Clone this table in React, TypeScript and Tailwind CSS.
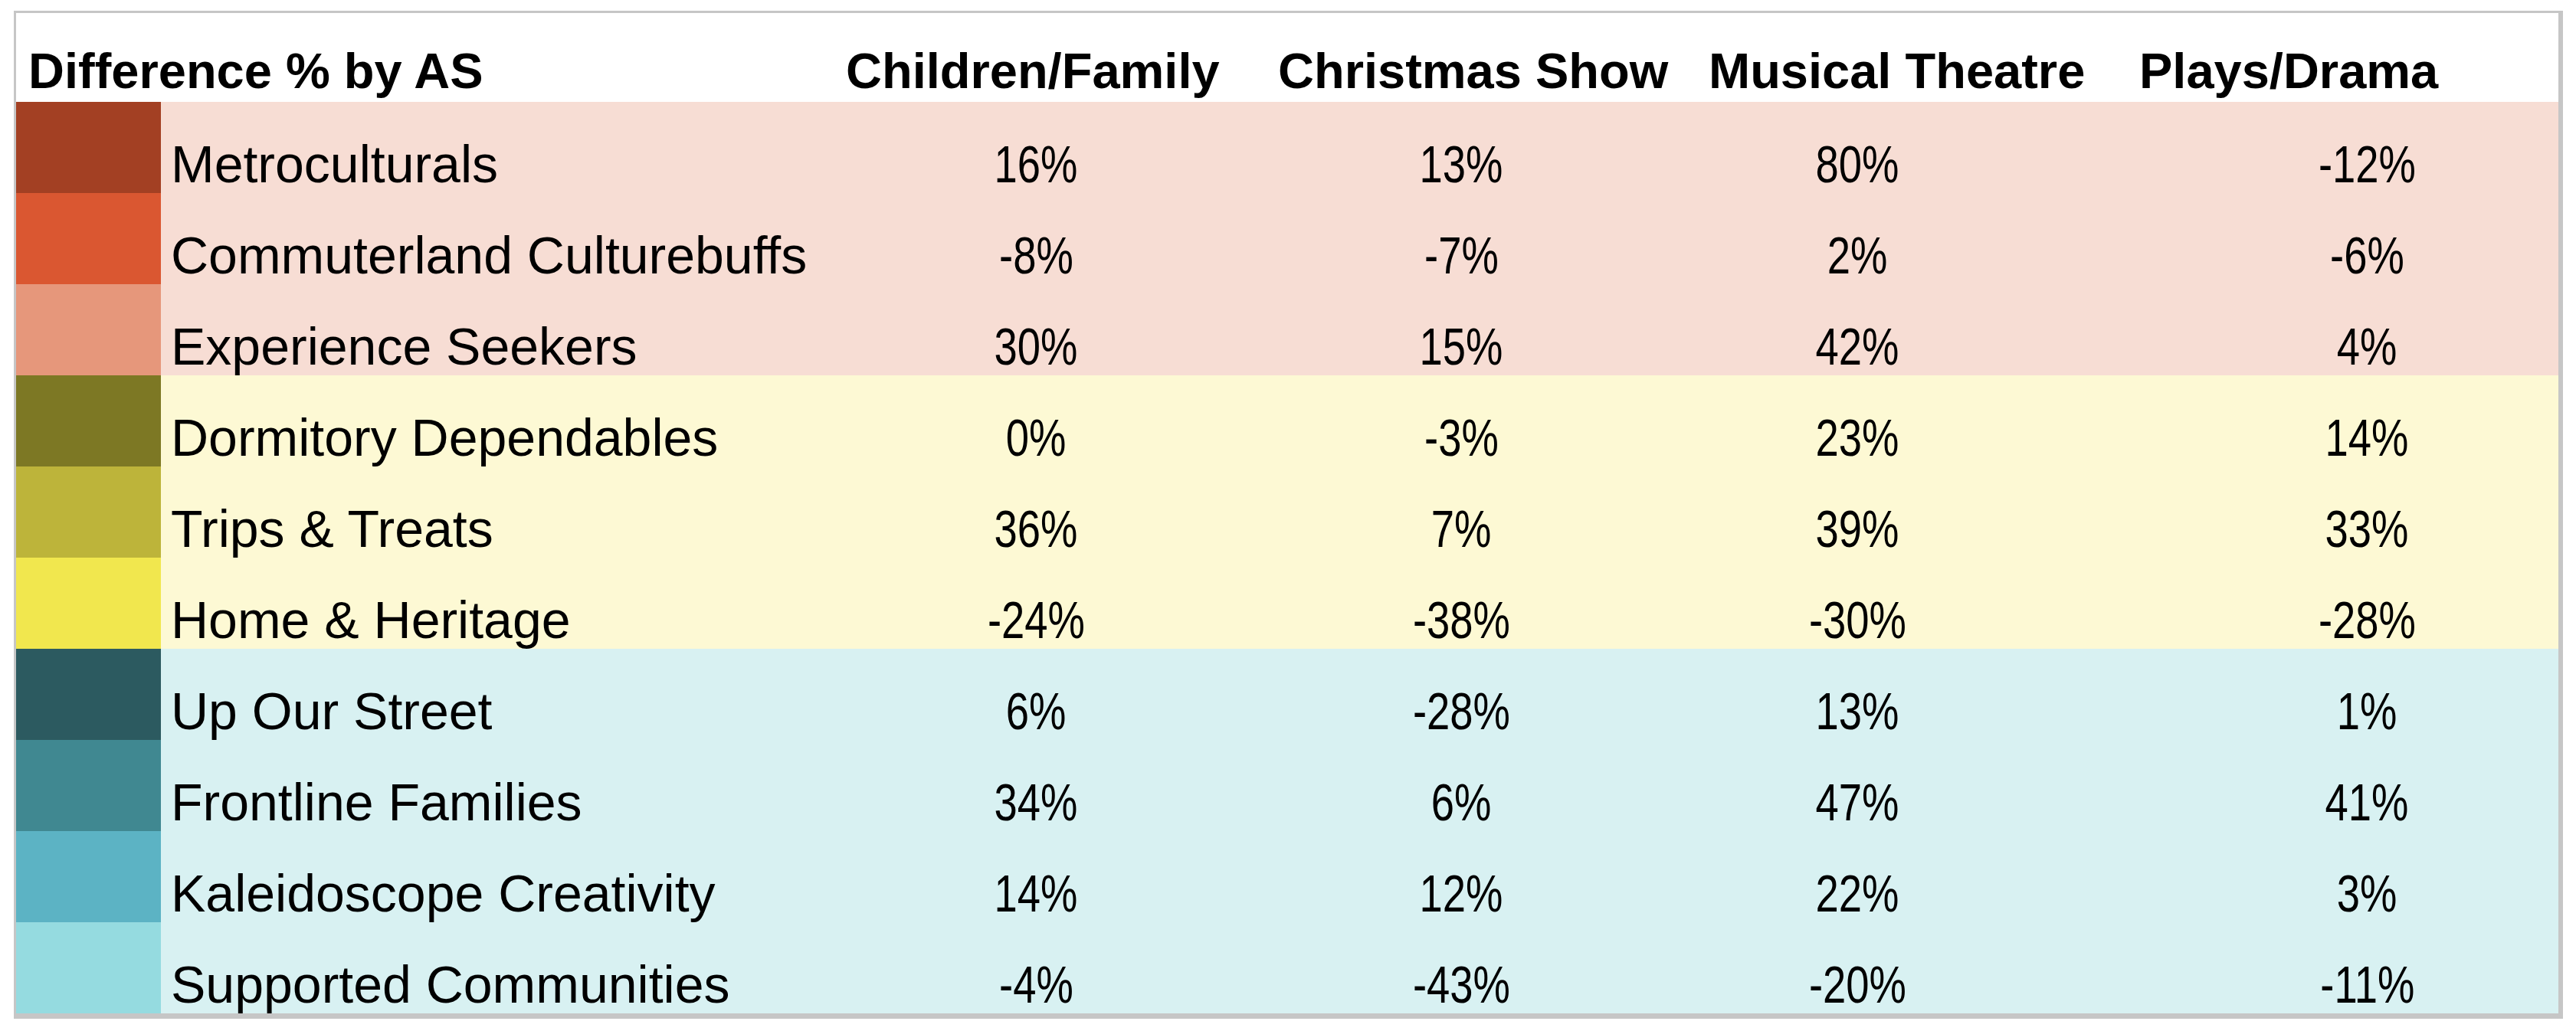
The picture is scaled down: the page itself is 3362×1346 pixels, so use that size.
import React from 'react';

type Row = {
  label: string;
  swatch: string;
  values: [string, string, string, string];
};

type Group = {
  band: string;
  rows: Row[];
};

const groups: Group[] = [
  {
    band: 'bg-[#f7ddd4]',
    rows: [
      { label: 'Metroculturals', swatch: 'bg-[#a34023]', values: ['16%', '13%', '80%', '-12%'] },
      { label: 'Commuterland Culturebuffs', swatch: 'bg-[#da5731]', values: ['-8%', '-7%', '2%', '-6%'] },
      { label: 'Experience Seekers', swatch: 'bg-[#e6977b]', values: ['30%', '15%', '42%', '4%'] },
    ],
  },
  {
    band: 'bg-[#fdf9d4]',
    rows: [
      { label: 'Dormitory Dependables', swatch: 'bg-[#7d7824]', values: ['0%', '-3%', '23%', '14%'] },
      { label: 'Trips & Treats', swatch: 'bg-[#bdb43a]', values: ['36%', '7%', '39%', '33%'] },
      { label: 'Home & Heritage', swatch: 'bg-[#f1e74e]', values: ['-24%', '-38%', '-30%', '-28%'] },
    ],
  },
  {
    band: 'bg-[#d8f1f2]',
    rows: [
      { label: 'Up Our Street', swatch: 'bg-[#2c5a60]', values: ['6%', '-28%', '13%', '1%'] },
      { label: 'Frontline Families', swatch: 'bg-[#408891]', values: ['34%', '6%', '47%', '41%'] },
      { label: 'Kaleidoscope Creativity', swatch: 'bg-[#5cb3c4]', values: ['14%', '12%', '22%', '3%'] },
      { label: 'Supported Communities', swatch: 'bg-[#95dbe0]', values: ['-4%', '-43%', '-20%', '-11%'] },
    ],
  },
];

const cell = 'flex items-end justify-center leading-[76px]';

// the source's figures are a narrow face; squeeze Arial-width digits to match
function Num({ v }: { v: string }) {
  return <span className="inline-block origin-center scale-x-[0.8]">{v}</span>;
}

function DataRow({ row }: { row: Row }) {
  return (
    <div className="flex h-[119px]">
      <div className={`w-[189px] shrink-0 ${row.swatch}`} />
      <div className="flex w-[864px] shrink-0 items-end whitespace-nowrap pl-[13px] leading-[76px]">
        {row.label}
      </div>
      <div className={`w-[556px] shrink-0 ${cell}`}>
        <Num v={row.values[0]} />
      </div>
      <div className={`w-[554px] shrink-0 ${cell}`}>
        <Num v={row.values[1]} />
      </div>
      <div className={`w-[480px] shrink-0 ${cell}`}>
        <Num v={row.values[2]} />
      </div>
      <div className={`flex-1 pl-[176px] ${cell}`}>
        <Num v={row.values[3]} />
      </div>
    </div>
  );
}

export default function App() {
  return (
    <div className="h-[1346px] w-[3362px] bg-white pl-[18px] pt-[14px] font-['Liberation_Sans',Arial,sans-serif] text-black">
      <div className="w-[3327px] border-b-[7px] border-l-[3px] border-r-[6px] border-t-[3px] border-[#c6c6c6] bg-white">
        <div className="flex h-[116px] items-end pb-[3px] text-[65px] font-bold leading-[74px]">
          <div className="w-[1083px] shrink-0 pl-[16px]">Difference % by AS</div>
          <div className="w-[564px] shrink-0">Children/Family</div>
          <div className="w-[562px] shrink-0">Christmas Show</div>
          <div className="w-[562px] shrink-0">Musical Theatre</div>
          <div className="flex-1">Plays/Drama</div>
        </div>
        <div className="text-[68px]">
          {groups.map((g) => (
            <div key={g.band} className={g.band}>
              {g.rows.map((r) => (
                <DataRow key={r.label} row={r} />
              ))}
            </div>
          ))}
        </div>
      </div>
    </div>
  );
}
